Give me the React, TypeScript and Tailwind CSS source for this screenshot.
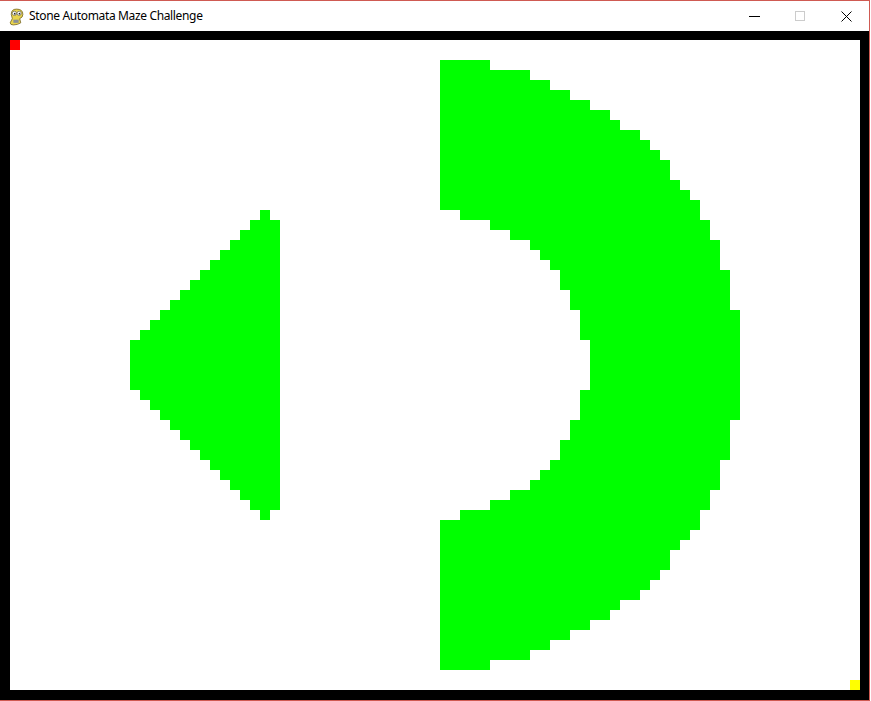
import React from 'react';

// board is 85 x 65 cells of 10px
const CELL = 10;

type Span = { row: number; from: number; to: number };

// right edge of the ring by distance from the middle row
const ringOuter = (d: number) => {
  const table: Record<number, number> = {
    30: 490, 29: 530, 28: 550, 27: 570, 26: 590, 25: 610, 24: 620, 23: 640,
    22: 650, 21: 660, 20: 670, 19: 670, 18: 680, 17: 690, 16: 700, 15: 700,
    14: 710, 13: 710, 12: 720, 11: 720, 10: 720,
  };
  if (d in table) return table[d];
  if (d >= 6) return 730;
  return 740;
};

// left edge of the ring's hole by distance from the middle row
const ringInner = (d: number) => {
  if (d >= 16) return 440;
  const table: Record<number, number> = {
    15: 460, 14: 490, 13: 510, 12: 530, 11: 540, 10: 550, 9: 560, 8: 560,
    7: 570, 6: 570, 5: 580, 4: 580, 3: 580,
  };
  if (d in table) return table[d];
  return 590;
};

const buildSpans = (): Span[] => {
  const spans: Span[] = [];
  // triangle, rows 17..47
  for (let r = 17; r <= 47; r++) {
    const d = Math.abs(r - 32);
    if (d === 15) {
      spans.push({ row: r, from: 260, to: 270 });
    } else {
      const left = d <= 2 ? 130 : 260 - 10 * (15 - d);
      spans.push({ row: r, from: left, to: 280 });
    }
  }
  // ring, rows 2..62
  for (let r = 2; r <= 62; r++) {
    const d = Math.abs(r - 32);
    spans.push({ row: r, from: ringInner(d), to: ringOuter(d) });
  }
  return spans;
};

const spans = buildSpans();

const PygameIcon = () => (
  <svg width="18" height="19" viewBox="0 0 17 18">
    <path d="M3 15 L5 11 L4 7 Q4 2 9 2 Q15 2 15 7 Q15 10 12 11 L13 15 Q10 17 6 17 Q3 17 3 15 Z" fill="#e8d44d" stroke="#7a6a2a" strokeWidth="0.8" />
    <circle cx="7" cy="6" r="2" fill="#fff" stroke="#555" strokeWidth="0.6" />
    <circle cx="11.5" cy="6" r="2" fill="#fff" stroke="#555" strokeWidth="0.6" />
    <circle cx="7.3" cy="6.3" r="0.8" fill="#222" />
    <circle cx="11.8" cy="6.3" r="0.8" fill="#222" />
    <path d="M6 12 L11 12 L11 15 L6 15 Z" fill="#8a8f96" />
  </svg>
);

const App: React.FC = () => {
  return (
    <div className="w-[871px] h-[701px] bg-white">
      <div className="w-[870px] h-[701px] flex flex-col border-t border-r border-b border-[#cf5a52]">
        <div className="h-[30px] flex items-center bg-white">
          <div className="pl-[7px] pr-[4px] flex items-center">
            <PygameIcon />
          </div>
          <span
            className="flex-1 text-[12px] text-black leading-none tracking-[-0.35px]"
            style={{ fontFamily: '"Segoe UI", "Noto Sans", sans-serif' }}
          >
            Stone Automata Maze Challenge
          </span>
          <div className="w-[46px] h-full flex items-center justify-center">
            <div className="w-[11px] h-px bg-black" />
          </div>
          <div className="w-[46px] h-full flex items-center justify-center">
            <div className="w-[10px] h-[10px] border border-[#cccccc]" />
          </div>
          <div className="w-[46px] h-full flex items-center justify-center">
            <svg width="11" height="11" viewBox="0 0 11 11">
              <path d="M0.5 0.5 L10.5 10.5 M10.5 0.5 L0.5 10.5" stroke="#000" strokeWidth="1" />
            </svg>
          </div>
        </div>
        <div className="flex-1 bg-black pt-[9px] pl-[10px] pr-[9px] pb-[10px]">
          <svg width="850" height="650" viewBox="0 0 850 650" shapeRendering="crispEdges" className="block bg-white">
            {spans.map((s, i) => (
              <rect
                key={i}
                x={s.from - 10}
                y={s.row * CELL}
                width={s.to - s.from}
                height={CELL}
                fill="#00ff00"
              />
            ))}
            <rect x={0} y={0} width={CELL} height={CELL} fill="#ff0000" />
            <rect x={840} y={640} width={CELL} height={CELL} fill="#ffff00" />
          </svg>
        </div>
      </div>
    </div>
  );
};

export default App;
